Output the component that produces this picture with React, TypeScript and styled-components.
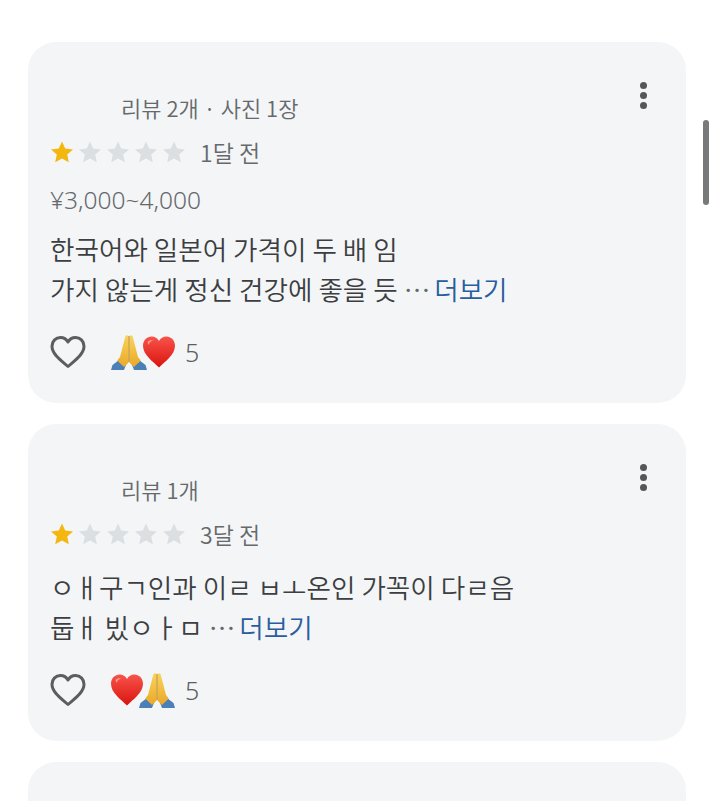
import { createGlobalStyle, styled } from "styled-components";

const reviews = [
  {
    id: 1,
    author: "리뷰 2개 · 사진 1장",
    date: "1달 전",
    price: "¥3,000~4,000",
    lines: ["한국어와 일본어 가격이 두 배 임", "가지 않는게 정신 건강에 좋을 듯"],
    emoji: ["pray", "heart"],
  },
  {
    id: 2,
    author: "리뷰 1개",
    date: "3달 전",
    lines: ["ㅇㅐ구ㄱ인과 이ㄹ ㅂㅗ온인 가꼭이 다ㄹ음", "둡ㅐ 빘ㅇㅏㅁ"],
    emoji: ["heart", "pray"],
  },
];

export default function App() {
  return (
    <Page>
      <GlobalStyle />
      {reviews.map((review) => (
        <Card key={review.id}>
          <Header>
            <Author>{review.author}</Author>
            <MoreButton>
              <i />
              <i />
              <i />
            </MoreButton>
          </Header>
          <RatingRow>
            <Stars>
              {[1, 2, 3, 4, 5].map((n) => (
                <Star key={n} filled={n === 1} />
              ))}
            </Stars>
            <DateText>{review.date}</DateText>
          </RatingRow>
          {review.price && <Price>{review.price}</Price>}
          <Body>
            <p>{review.lines[0]}</p>
            <p>
              {review.lines[1]} <Dots>…</Dots> <More>더보기</More>
            </p>
          </Body>
          <Footer>
            <LikeIcon />
            <Reactions>
              {review.emoji.map((e) =>
                e === "heart" ? <HeartEmoji key={e} /> : <PrayEmoji key={e} />
              )}
            </Reactions>
            <Count>5</Count>
          </Footer>
        </Card>
      ))}
      <Card />
      <ScrollThumb />
    </Page>
  );
}

function Star({ filled }: { filled: boolean }) {
  return (
    <svg width="24" height="24" viewBox="0 0 24 24">
      <path
        d="M12 1.5l3.2 7.1 7.8.8-5.8 5.2 1.6 7.6L12 18.4l-6.8 3.8 1.6-7.6L1 9.4l7.8-.8z"
        fill={filled ? "#f4b70f" : "#dcdfe2"}
      />
    </svg>
  );
}

function LikeIcon() {
  return (
    <svg width="36" height="34" viewBox="0 0 36 34" fill="none">
      <path
        d="M18 31.5C12 26 2 19.5 2 11.2 2 6 6 2.4 10.4 2.4c3.2 0 6 1.6 7.6 4.6 1.6-3 4.4-4.6 7.6-4.6C30 2.4 34 6 34 11.2c0 8.3-10 14.8-16 20.3z"
        stroke="#5b5e61"
        strokeWidth="3"
        strokeLinejoin="round"
      />
    </svg>
  );
}

function HeartEmoji() {
  return (
    <svg width="34" height="34" viewBox="0 0 34 34">
      <defs>
        <linearGradient id="heartFill" x1="0" y1="0" x2="0" y2="1">
          <stop offset="0" stopColor="#f8534a" />
          <stop offset="1" stopColor="#d9140f" />
        </linearGradient>
      </defs>
      <path
        d="M17 32.5C11 26.5 1 20 1 10.8 1 5 5.2 1.5 9.6 1.5c3.2 0 5.9 1.6 7.4 4.4 1.5-2.8 4.2-4.4 7.4-4.4C28.8 1.5 33 5 33 10.8c0 9.2-10 15.7-16 21.7z"
        fill="url(#heartFill)"
      />
      <path d="M6 6.5c1.6-1.6 4-1.7 5.6-.8-2.6.2-4.4 1.6-5 4-.8-1-1.2-2.2-.6-3.2z" fill="#ff9c93" />
    </svg>
  );
}

function PrayEmoji() {
  return (
    <svg width="38" height="37" viewBox="0 0 38 37">
      <defs>
        <linearGradient id="handFill" x1="0" y1="0" x2="0" y2="1">
          <stop offset="0" stopColor="#f9d45c" />
          <stop offset="1" stopColor="#eba827" />
        </linearGradient>
      </defs>
      <path d="M1 36l1.5-5 8.5-6.5 5.5 5-2.5 6.5z" fill="#4a7fb8" />
      <path d="M37 36l-1.5-5-8.5-6.5-5.5 5 2.5 6.5z" fill="#4a7fb8" />
      <path d="M18.6 2c-1.4-1.6-3-.8-3.4 1L10 23l-2.8 3.4 6.8 6.6 4.6-4.6z" fill="url(#handFill)" />
      <path d="M19.4 2c1.4-1.6 3-.8 3.4 1L28 23l2.8 3.4-6.8 6.6-4.6-4.6z" fill="url(#handFill)" />
      <path d="M19 2v26" stroke="#b98520" strokeWidth="1" />
    </svg>
  );
}

const GlobalStyle = createGlobalStyle`
  html, body {
    margin: 0;
    background: #ffffff;
    overflow: hidden;
  }
  body {
    font-family: "Noto Sans CJK KR", sans-serif;
  }
`;

const Page = styled.div`
  position: relative;
  box-sizing: border-box;
  width: 714px;
  height: 801px;
  overflow: hidden;
  padding: 42px 28px 0;
  display: flex;
  flex-direction: column;
  gap: 21px;
`;

const Card = styled.article`
  box-sizing: border-box;
  flex-shrink: 0;
  background: #f3f5f7;
  border-radius: 28px;
  padding: 38px 39px 32px 22px;
  min-height: 120px;
`;

const Header = styled.div`
  display: flex;
  justify-content: space-between;
  align-items: flex-start;
  height: 57px;
  padding-left: 71px;
`;

const Author = styled.span`
  font-size: 22px;
  font-weight: 350;
  line-height: 58px;
  margin-top: -2px;
  color: #66696c;
`;

const MoreButton = styled.div`
  display: flex;
  flex-direction: column;
  gap: 3px;
  margin-top: 2px;
  i {
    width: 7px;
    height: 7px;
    border-radius: 50%;
    background: #54575a;
  }
`;

const RatingRow = styled.div`
  display: flex;
  align-items: center;
  gap: 14px;
  height: 30px;
`;

const Stars = styled.div`
  display: flex;
  gap: 4px;
`;

const DateText = styled.span`
  font-size: 23px;
  font-weight: 350;
  line-height: 28px;
  color: #66696c;
`;

const Price = styled.div`
  margin-top: 21px;
  font-family: "Noto Sans", sans-serif;
  font-size: 24.5px;
  font-weight: 300;
  line-height: 23px;
  color: #66696c;
`;

const Body = styled.div`
  margin-top: 18px;
  font-size: 26.6px;
  font-weight: 350;
  line-height: 39.5px;
  color: #3c3e41;
  p {
    margin: 0;
    white-space: nowrap;
  }
`;

const Dots = styled.span`
  color: #66696c;
`;

const More = styled.span`
  margin-left: -2px;
  color: #2a5d9e;
`;

const Footer = styled.div`
  display: flex;
  align-items: center;
  margin-top: 25px;
  height: 38px;
`;

const Reactions = styled.div`
  display: flex;
  align-items: center;
  margin-left: 24px;
  svg + svg {
    margin-left: -6px;
  }
`;

const Count = styled.span`
  margin-left: 9px;
  font-family: "Noto Sans", sans-serif;
  font-size: 25px;
  font-weight: 300;
  color: #5b5e61;
`;

const ScrollThumb = styled.div`
  position: absolute;
  top: 120px;
  left: 703px;
  width: 6px;
  height: 85px;
  border-radius: 3px;
  background: #78797b;
`;
